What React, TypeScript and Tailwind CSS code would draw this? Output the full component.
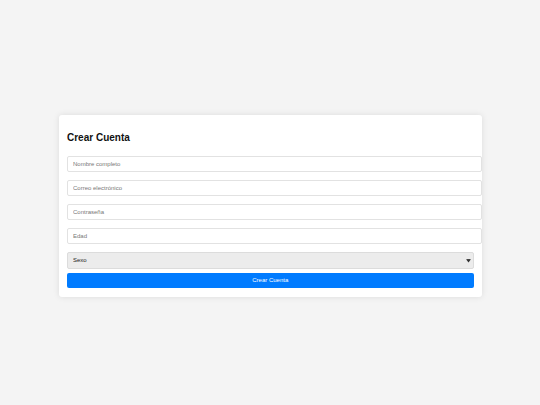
import React from "react";

export default function App() {
  return (
    <div className="min-h-screen w-full bg-[#f4f4f4] pt-[115px]" style={{ fontFamily: '"Liberation Sans", Arial, sans-serif' }}>
      <div className="mx-auto w-[423px] rounded-[3px] bg-white pt-[17px] pb-[9px] pl-[8.5px] pr-[8px] shadow-[0_0_6px_rgba(0,0,0,0.1)]">
        <h2 className="h-[12px] text-[10px] font-bold leading-[12px] text-[#111]">Crear Cuenta</h2>
        <div className="mt-[12px] flex flex-col gap-[8px]">
          {["Nombre completo", "Correo electrónico", "Contraseña", "Edad"].map((p) => (
            <input
              key={p}
              type="text"
              placeholder={p}
              className="box-border block h-[16px] w-[415px] rounded-[2px] border border-[#e2e2e2] bg-white px-[5px] text-[6px] text-black outline-none placeholder:text-[#777]"
            />
          ))}
          <div className="relative">
            <select
              defaultValue=""
              className="box-border block h-[16.5px] w-full appearance-none rounded-[2px] border border-[#dcdcdc] bg-[#ececec] px-[5px] text-[6px] font-medium text-[#222] outline-none"
            >
              <option value="">Sexo</option>
              <option value="m">Masculino</option>
              <option value="f">Femenino</option>
            </select>
            <svg className="pointer-events-none absolute right-[3px] top-[6.5px]" width="5" height="4" viewBox="0 0 5 4">
              <path d="M0.3 0.6 L2.5 3.4 L4.7 0.6 Z" fill="#333" />
              <rect x="0.6" y="0.2" width="3.8" height="0.9" fill="#333" />
            </svg>
          </div>
        </div>
        <button className="mt-[4.5px] block h-[15px] w-full rounded-[2px] bg-[#007bff] text-[6px] text-white">
          Crear Cuenta
        </button>
      </div>
    </div>
  );
}
